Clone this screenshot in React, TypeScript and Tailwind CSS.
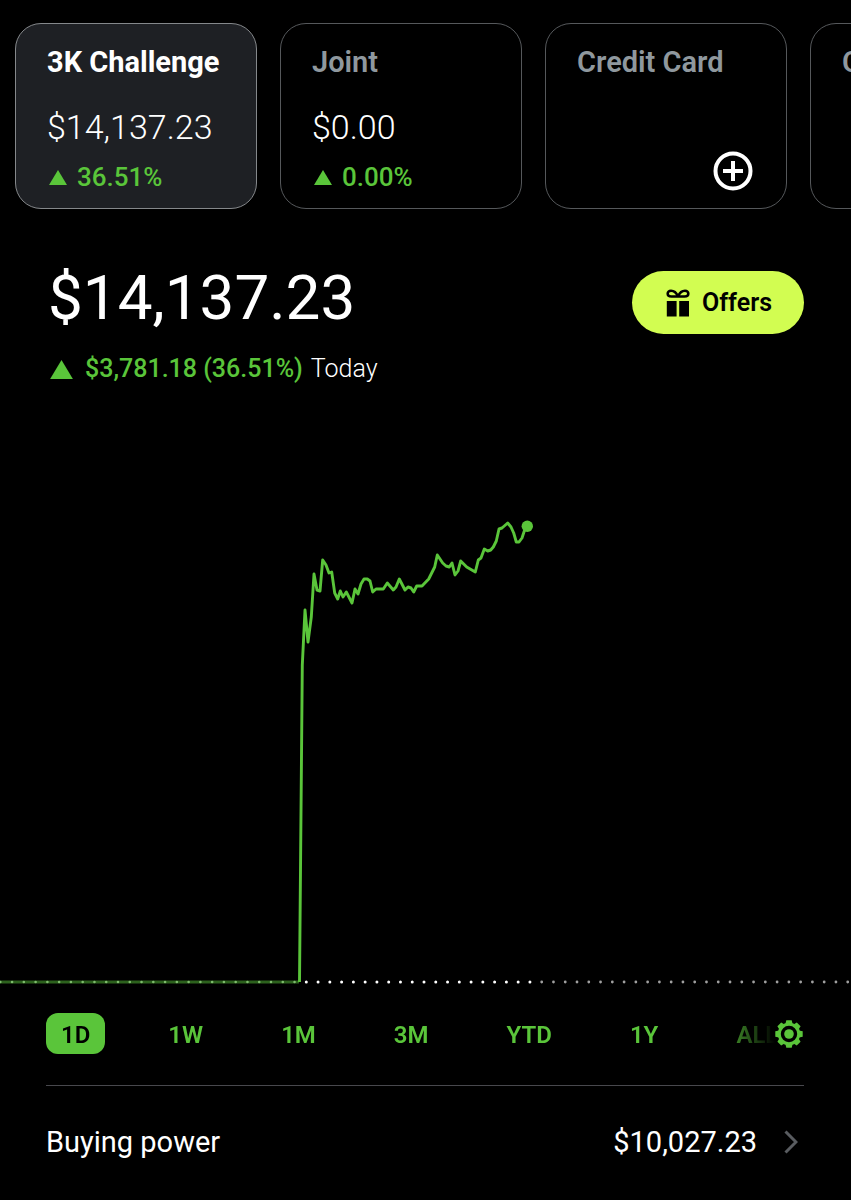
import { useState } from "react";

const accounts = [
  { name: "3K Challenge", value: "$14,137.23", change: "36.51%" },
  { name: "Joint", value: "$0.00", change: "0.00%" },
  { name: "Credit Card" },
  { name: "C" },
];

const ranges = ["1D", "1W", "1M", "3M", "YTD", "1Y", "ALL"];

const points =
  "299.5,982 300.5,870 302.3,665 305,610 308,642 311.3,617 314,574 317,590 320,591 322.7,560 326,565 329,573 331.7,572 334.7,593 337.7,599 340.3,591 343,597 346.3,592 352,603 355,589 358,594 361,584 364,579 367.3,579 370,581 372.7,592 376,589 383.3,589 387.3,583 393.3,590 396,587 399.3,579 405,590 408,587 411,588 413.7,592 416.7,586 422,586 428.7,579 431.7,573 434.7,567 437.3,555 442.7,563 446,566 449.3,567 452,563 455,575 458,571 460.7,561 466.7,567 475.3,572 478.3,560 481,558 484.3,549 487.7,551 490.7,550 493.3,547 496.3,541 499,529 502,528 507.7,523 511,527 513.7,533 516.3,542 519,542 522,538 524.3,531 527.3,526";

const Triangle = ({ className }: { className: string }) => (
  <svg viewBox="0 0 18 15" className={className} fill="#5ac53a" aria-hidden="true">
    <path d="M9 0 18 15H0Z" />
  </svg>
);

const PlusIcon = () => (
  <svg viewBox="0 0 40 40" className="size-10" fill="none" stroke="#fff" strokeWidth="4" aria-hidden="true">
    <circle cx="20" cy="20" r="17.5" />
    <path d="M20 10v20M10 20h20" />
  </svg>
);

const GiftIcon = () => (
  <svg viewBox="0 0 24 28" className="h-7 w-6" aria-hidden="true">
    <path d="M.8 12h9.800v15.500H.8zM13.200 12h9.800v15.500h-9.800z" />
    <path
      d="M12 7.500C10.500 4 8 1.800 5 1.800 2.800 1.800 1.700 3 1.700 4.700 1.700 6.600 3.200 7.500 5.500 7.500H18.500C20.800 7.500 22.300 6.600 22.300 4.700 22.300 3 21.200 1.800 19 1.800 16 1.800 13.500 4 12 7.500Z"
      fill="none"
      stroke="#000"
      strokeWidth="2.600"
      strokeLinejoin="round"
    />
  </svg>
);

const GearIcon = () => (
  <svg viewBox="-14 -14 28 28" className="size-7" fill="#5ac53a" aria-hidden="true">
    <circle r="9.700" fill="none" stroke="#5ac53a" strokeWidth="3" />
    <circle r="4.800" />
    {[0, 45, 90, 135, 180, 225, 270, 315].map((a) => (
      <path key={a} d="M-3.600 -10 -2.700 -13.700H2.700L3.600 -10Z" transform={`rotate(${a})`} />
    ))}
  </svg>
);

const App = () => {
  const [account, setAccount] = useState("3K Challenge");
  const [range, setRange] = useState("1D");

  return (
    <main className="min-h-screen overflow-hidden bg-black pt-[23px] font-[Roboto,sans-serif] text-white">
      <div className="flex gap-[23px] overflow-hidden pl-[15px]">
        {accounts.map((a) => (
          <button
            key={a.name}
            onClick={() => setAccount(a.name)}
            className={`flex h-[186px] w-[242px] shrink-0 flex-col items-start rounded-[26px] border px-[31px] pt-[22px] text-left ${
              account === a.name ? "border-[#85888b] bg-[#1e2024]" : "border-[#55585b]"
            }`}
          >
            <span
              className={`text-[29px] leading-8 ${
                account === a.name ? "font-bold text-white" : "font-semibold text-[#8f989e]"
              }`}
            >
              {a.name}
            </span>
            {a.value ? (
              <>
                <span className="mt-[29px] text-[34px] leading-10 font-light">{a.value}</span>
                <span className="mt-[14px] flex items-center gap-2.5 pl-0.5 text-[26px] leading-8 font-medium text-[#5ac53a]">
                  <Triangle className="h-[15px] w-[18px]" />
                  {a.change}
                </span>
              </>
            ) : (
              <span className="mt-[73px] mr-0.5 self-end">
                <PlusIcon />
              </span>
            )}
          </button>
        ))}
      </div>

      <section className="mt-[57px] flex items-start justify-between pr-[47px] pl-12">
        <div>
          <h1 className="text-[62px] leading-16">$14,137.23</h1>
          <p className="mt-[23px] flex items-center text-[25px] leading-8">
            <Triangle className="mr-3 ml-0.5 h-[19px] w-[23px]" />
            <span className="font-medium text-[#5ac53a]">$3,781.18 (36.51%)</span>
            <span className="ml-2 font-light">Today</span>
          </p>
        </div>
        <button className="mt-[5px] flex h-[63px] items-center gap-3 rounded-full bg-[#d2fd51] pr-8 pl-[34px] text-[25px] font-semibold text-black">
          <GiftIcon />
          Offers
        </button>
      </section>

      <svg viewBox="0 500 851 490" className="mt-[115px] block w-full" fill="none" role="img" aria-label="Portfolio value today">
        <path d="M0 982H299" stroke="#2c611d" strokeWidth="2.800" />
        <path d="M0.300 982H299" stroke="#7fbd6d" strokeWidth="2.600" strokeLinecap="round" strokeDasharray="0 11.770" />
        <path d="M306.300 982H531" stroke="#fff" strokeWidth="3" strokeLinecap="round" strokeDasharray="0 11.770" />
        <path d="M541.700 982H851" stroke="#a0a0a0" strokeWidth="2.800" strokeLinecap="round" strokeDasharray="0 11.770" />
        <polyline points={points} stroke="#5ac53a" strokeWidth="2.900" strokeLinejoin="round" />
        <circle cx="527.300" cy="526.300" r="5.700" fill="#5ac53a" />
      </svg>

      <div className="mr-12 ml-[46px] mt-[23px] flex items-center pb-[31px]">
        <nav className="flex min-w-0 flex-1 gap-12 overflow-hidden [mask-image:linear-gradient(to_right,#000_calc(100%-60px),transparent)]">
          {ranges.map((r) => (
            <button
              key={r}
              onClick={() => setRange(r)}
              className={`h-[41px] shrink-0 rounded-xl px-[15px] pt-0.5 text-[24px] font-semibold ${
                range === r ? "bg-[#5ac53a] text-black" : "text-[#5ac53a]"
              }`}
            >
              {r}
            </button>
          ))}
        </nav>
        <button aria-label="Chart settings">
          <GearIcon />
        </button>
      </div>

      <a
        href="#buying-power"
        className="mr-[47px] ml-[46px] flex items-center border-t border-[#48484d] pt-[38px] pb-9 text-[29px] leading-9"
      >
        <span>Buying power</span>
        <span className="ml-auto">$10,027.23</span>
        <svg viewBox="0 0 14 24" className="mr-1.5 ml-[27px] h-6 w-3.5" fill="none" stroke="#595c60" strokeWidth="3" aria-hidden="true">
          <path d="M1.500 1.500 12 12 1.500 22.500" />
        </svg>
      </a>
    </main>
  );
};

export default App;
